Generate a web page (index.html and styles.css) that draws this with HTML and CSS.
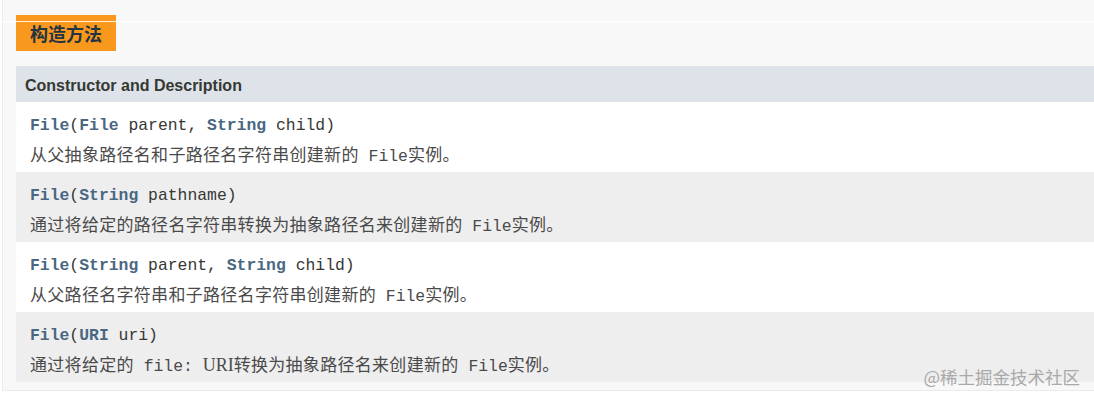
FILE: index.html
```html
<!DOCTYPE html>
<html lang="zh-CN">
<head>
<meta charset="utf-8">
<title>构造方法</title>
<link rel="stylesheet" href="styles.css">
</head>
<body>
<div class="panel">
  <div class="caption">构造方法</div>
  <div class="table">
    <div class="thead">Constructor and Description</div>
    <div class="row odd">
      <div class="sig"><b>File</b>(<b>File</b> parent, <b>String</b> child)</div>
      <div class="desc">从父抽象路径名和子路径名字符串创建新的<code> File</code>实例。</div>
    </div>
    <div class="row even">
      <div class="sig"><b>File</b>(<b>String</b> pathname)</div>
      <div class="desc">通过将给定的路径名字符串转换为抽象路径名来创建新的<code> File</code>实例。</div>
    </div>
    <div class="row odd">
      <div class="sig"><b>File</b>(<b>String</b> parent, <b>String</b> child)</div>
      <div class="desc">从父路径名字符串和子路径名字符串创建新的<code> File</code>实例。</div>
    </div>
    <div class="row even">
      <div class="sig"><b>File</b>(<b>URI</b> uri)</div>
      <div class="desc">通过将给定的<code> file: </code><span class="serif">URI</span>转换为抽象路径名来创建新的<code> File</code>实例。</div>
    </div>
  </div>
</div>
<div class="rule"></div>
<div class="watermark">@稀土掘金技术社区</div>
</body>
</html>
```

FILE: styles.css
```css
html, body {
  margin: 0;
  padding: 0;
  background: #ffffff;
}
body {
  position: relative;
  width: 1094px;
  height: 402px;
  overflow: hidden;
  font-family: "Noto Sans CJK SC", "Liberation Sans", sans-serif;
}
.panel {
  margin-left: 2px;
  background: #f8f8f8;
  border-left: 1px solid #ebebeb;
  border-bottom: 1px solid #ebebeb;
  padding: 15px 0 8px 13px;
}
.caption {
  width: 100px;
  height: 36px;
  box-sizing: border-box;
  padding: 2px 0 0 14px;
  background: #f8981d;
  color: #253441;
  font-family: "Noto Sans CJK SC", sans-serif;
  font-weight: 700;
  font-size: 18px;
  line-height: 32px;
}
.table {
  margin-top: 15px;
}
.thead {
  height: 36px;
  box-sizing: border-box;
  padding: 3px 0 0 9px;
  background: #dee3e9;
  color: #353833;
  font-family: "Liberation Sans", Arial, sans-serif;
  font-weight: 700;
  font-size: 16px;
  line-height: 33px;
}
.row {
  height: 70px;
  box-sizing: border-box;
  padding: 10px 0 0 14px;
}
.odd { background: #ffffff; }
.even { background: #eeeeef; }
.sig {
  height: 28px;
  line-height: 28px;
  font-family: "Liberation Mono", "Courier New", monospace;
  font-size: 16.4px;
  color: #353833;
  white-space: pre;
}
.sig b {
  color: #4a6782;
  font-weight: 700;
}
.desc {
  height: 28px;
  line-height: 28px;
  font-family: "Noto Sans CJK SC", sans-serif;
  font-size: 17px;
  letter-spacing: 0.3px;
  color: #4a4a4a;
  white-space: pre;
}
.desc code {
  font-family: "Liberation Mono", "Courier New", monospace;
  font-size: 16.4px;
  letter-spacing: 0;
  color: #4a4a4a;
}
.serif {
  font-family: "Liberation Serif", serif;
  font-size: 18px;
  letter-spacing: 0;
}
.rule {
  position: absolute;
  top: 21px;
  left: 0;
  right: 0;
  height: 1px;
  background: rgba(255, 255, 255, 0.85);
}
.watermark {
  position: absolute;
  right: 14px;
  top: 365px;
  font-family: "Noto Sans CJK SC", sans-serif;
  font-size: 17.5px;
  line-height: 24px;
  color: #a9a9a9;
}
```
